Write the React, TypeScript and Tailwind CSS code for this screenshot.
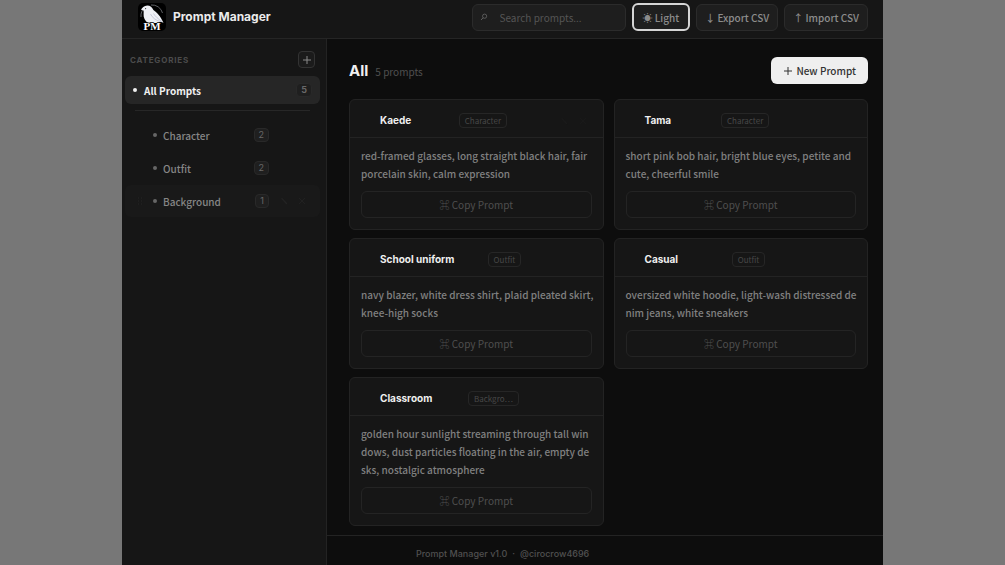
type Category = { name: string; count: number; hovered?: boolean };
type Prompt = { title: string; tag: string; text: string; hovered?: boolean };

const categories: Category[] = [
  { name: "Character", count: 2 },
  { name: "Outfit", count: 2 },
  { name: "Background", count: 1, hovered: true },
];

const prompts: Prompt[] = [
  {
    title: "Kaede",
    tag: "Character",
    text: "red-framed glasses, long straight black hair, fair\nporcelain skin, calm expression",
    hovered: true,
  },
  {
    title: "Tama",
    tag: "Character",
    text: "short pink bob hair, bright blue eyes, petite and\ncute, cheerful smile",
  },
  {
    title: "School uniform",
    tag: "Outfit",
    text: "navy blazer, white dress shirt, plaid pleated skirt,\nknee-high socks",
  },
  {
    title: "Casual",
    tag: "Outfit",
    text: "oversized white hoodie, light-wash distressed de\nnim jeans, white sneakers",
  },
  {
    title: "Classroom",
    tag: "Backgro⋯",
    text: "golden hour sunlight streaming through tall win\ndows, dust particles floating in the air, empty de\nsks, nostalgic atmosphere",
  },
];

const Logo = () => (
  <svg viewBox="0 0 28 28" className="size-7 shrink-0" aria-hidden="true">
    <rect width="28" height="28" rx="5" fill="#000" />
    <path
      d="M3 14A10.8 10.8 0 0 1 7 4.5M13 2A10.8 10.8 0 0 1 24.5 10"
      fill="none"
      stroke="#6a6c70"
      strokeWidth="0.9"
    />
    <path
      d="M3 7.2C3.6 4.6 6.3 2.6 9.2 2.5C12.3 2.5 14.2 4.4 15.4 7C18.7 9.2 22.5 13 25.5 19.8L22.5 18.8L20.5 20H10C7 18 5.2 14.5 5.6 11C5.7 9.4 5.8 8.4 5.4 7.4C4.6 7.1 3.8 7 3 7.2Z"
      fill="#eef0f5"
    />
    <path
      d="M12.5 11C14 14.5 18 17.5 22.5 18.7M15.5 10.5C17 13 20 16 24 18.5"
      fill="none"
      stroke="#b4b9ce"
      strokeWidth="0.7"
    />
    <circle cx="7.6" cy="5.6" r="0.6" fill="#333" />
    <text
      x="14"
      y="27"
      textAnchor="middle"
      fontSize="11"
      fontWeight="700"
      fill="#fff"
      stroke="#000"
      strokeWidth="1.4"
      paintOrder="stroke"
      className="font-['Liberation_Serif',serif]"
    >
      PM
    </text>
  </svg>
);

const PencilIcon = () => (
  <svg viewBox="0 0 10 10" className="size-2.5" aria-hidden="true">
    <path d="M2 2.5L3.2 2L8 7L8.3 8.4L7 8Z" fill="currentColor" />
  </svg>
);

const CloseIcon = () => (
  <svg viewBox="0 0 10 10" className="size-2.5" aria-hidden="true">
    <path d="M2 2L8 8M8 2L2 8" stroke="currentColor" strokeWidth="0.9" />
  </svg>
);

const PlusIcon = () => (
  <svg viewBox="0 0 10 10" className="size-2.5" aria-hidden="true">
    <path d="M5 1V9M1 5H9" stroke="currentColor" strokeWidth="1" />
  </svg>
);

const Grip = () => (
  <svg viewBox="0 0 6 10" className="h-2.5 w-1.5" aria-hidden="true">
    <g fill="currentColor">
      <circle cx="1.5" cy="2" r="0.7" />
      <circle cx="4.5" cy="2" r="0.7" />
      <circle cx="1.5" cy="5" r="0.7" />
      <circle cx="4.5" cy="5" r="0.7" />
      <circle cx="1.5" cy="8" r="0.7" />
      <circle cx="4.5" cy="8" r="0.7" />
    </g>
  </svg>
);

const Count = ({ value }: { value: number }) => (
  <span className="flex h-3.5 items-center rounded-sm border border-[#292929] bg-[#1f1f1f] px-1 font-['Inter',sans-serif] text-[9px] text-[#686868]">
    {value}
  </span>
);

const Header = () => (
  <header className="flex h-[39px] items-center border-b border-[#252525] bg-[#161616] pr-[15px] pb-1 pl-4">
    <Logo />
    <h1 className="ml-[7px] font-['Inter',sans-serif] text-[12px] font-bold text-[#ebebeb]">
      Prompt Manager
    </h1>
    <div className="ml-auto flex items-center gap-1.5">
      <label className="flex h-[27px] w-[154px] items-center gap-3 rounded-md border border-[#2b2b2b] bg-[#1e1e1e] px-[7px]">
        <svg viewBox="0 0 8 8" className="size-2 shrink-0" aria-hidden="true">
          <circle cx="4.6" cy="3.2" r="2.1" fill="none" stroke="#666" strokeWidth="0.8" />
          <path d="M3.1 4.8L1 7" stroke="#666" strokeWidth="0.9" />
        </svg>
        <input
          type="search"
          aria-label="Search prompts"
          placeholder="Search prompts..."
          className="w-full min-w-0 bg-transparent text-[10px] outline-none placeholder:text-[#555]"
        />
      </label>
      <button className="flex h-7 items-center rounded-md border-2 border-[#d5d5d5] bg-[#1f1f1f] px-[9px] text-[10px] font-medium text-[#8c8c8c]">
        ☀ Light
      </button>
      <button className="flex h-[27px] items-center rounded-md border border-[#2b2b2b] bg-[#1e1e1e] px-2 text-[10px] font-medium text-[#8c8c8c]">
        ↓ Export CSV
      </button>
      <button className="flex h-[27px] items-center rounded-md border border-[#2b2b2b] bg-[#1e1e1e] px-2 text-[10px] font-medium text-[#8c8c8c]">
        ↑ Import CSV
      </button>
    </div>
  </header>
);

const Sidebar = () => (
  <aside className="w-[205px] shrink-0 border-r border-[#232323] bg-[#161616] pt-3 pr-1.5 pl-[3px]">
    <div className="flex items-center justify-between pr-[5px] pl-[5px]">
      <h2 className="font-['Inter',sans-serif] text-[8px] font-bold tracking-widest text-[#4c4c4c]">
        CATEGORIES
      </h2>
      <button
        aria-label="Add category"
        className="flex size-[17px] items-center justify-center rounded-sm border border-[#333] bg-[#1b1b1b] text-[#8a8a8a]"
      >
        <PlusIcon />
      </button>
    </div>
    <button className="mt-2 flex h-7 w-full items-center rounded-md bg-[#262626] px-2 text-[10px] font-bold text-[#f0f0f0]">
      <span className="mr-[7px] size-1 rounded-full bg-current" />
      <span className="mr-auto">All Prompts</span>
      <Count value={5} />
    </button>
    <hr className="mx-2.5 mt-1.5 mb-2 border-[#272727]" />
    <ul className="flex flex-col gap-px">
      {categories.map((c) => (
        <li
          key={c.name}
          className={`flex h-8 items-center rounded-md pr-[13px] pl-3 text-[#232323] ${c.hovered ? "bg-[#191919]" : ""}`}
        >
          <span className={c.hovered ? "" : "invisible"}>
            <Grip />
          </span>
          <span className="ml-2.5 size-1 rounded-full bg-[#666]" />
          <a href="#" className="mr-auto ml-1.5 text-[10px] font-medium text-[#868686]">
            {c.name}
          </a>
          <Count value={c.count} />
          <span className={`ml-2.5 flex gap-2 ${c.hovered ? "" : "invisible"}`}>
            <button aria-label={`Edit ${c.name}`}>
              <PencilIcon />
            </button>
            <button aria-label={`Delete ${c.name}`}>
              <CloseIcon />
            </button>
          </span>
        </li>
      ))}
    </ul>
  </aside>
);

const PromptCard = ({ title, tag, text, hovered }: Prompt) => (
  <article className="rounded-md border border-[#232323] bg-[#161616]">
    <div className="flex h-[38px] items-center border-b border-[#232323] pr-2.5 pl-[30px] pt-1">
      <div className="flex flex-1 items-center justify-between">
        <h3 className="font-['Inter',sans-serif] text-[10px] font-bold text-[#efefef]">{title}</h3>
        <span className="flex h-[15px] items-center rounded-sm border border-[#262626] px-[5px] text-[8px] text-[#484848]">
          {tag}
        </span>
        <span className={`flex w-[38px] justify-around text-[#1a1a1a] ${hovered ? "" : "invisible"}`}>
          <button aria-label={`Edit ${title}`}>
            <PencilIcon />
          </button>
          <button aria-label={`Delete ${title}`}>
            <CloseIcon />
          </button>
        </span>
      </div>
    </div>
    <div className="px-[11px] pt-[9px] pb-[11px]">
      <p className="text-[10px] leading-[18px] font-medium whitespace-pre text-[#808080]">{text}</p>
      <button className="mt-2 flex h-[27px] w-full items-center justify-center rounded-md border border-[#242424] text-[10px] text-[#4f4f4f]">
        ⌘ Copy Prompt
      </button>
    </div>
  </article>
);

const App = () => {
  return (
    <div className="min-h-screen bg-[#777] px-[122px] font-['Noto_Sans_CJK_JP',sans-serif]">
      <div className="flex min-h-screen flex-col bg-[#0d0d0d]">
        <Header />
        <div className="flex flex-1">
          <Sidebar />
          <div className="flex min-w-0 flex-1 flex-col">
            <main className="flex-1 pt-[18px] pr-[15px] pb-2 pl-[22px]">
              <div className="flex items-center">
                <h2 className="pt-0.5 font-['Inter',sans-serif] text-[15px] font-bold text-[#f0f0f0]">
                  All
                </h2>
                <span className="ml-[7px] pt-0.5 text-[10px] text-[#505050]">5 prompts</span>
                <button className="ml-auto flex h-[27px] items-center gap-[3px] rounded-md bg-[#efefef] px-3 text-[10px] font-medium text-[#333]">
                  <PlusIcon /> New Prompt
                </button>
              </div>
              <div className="mt-[15px] grid grid-cols-2 items-start gap-x-2.5 gap-y-2">
                {prompts.map((p) => (
                  <PromptCard key={p.title} {...p} />
                ))}
              </div>
            </main>
            <footer className="flex h-[30px] items-center border-t border-[#232323] pt-1.5 pl-[89px] font-['Inter',sans-serif] text-[9px] font-medium text-[#505050]">
              <span>Prompt Manager v1.0</span>
              <span className="mx-[5px]">·</span>
              <span>@cirocrow4696</span>
            </footer>
          </div>
        </div>
      </div>
    </div>
  );
};

export default App;
